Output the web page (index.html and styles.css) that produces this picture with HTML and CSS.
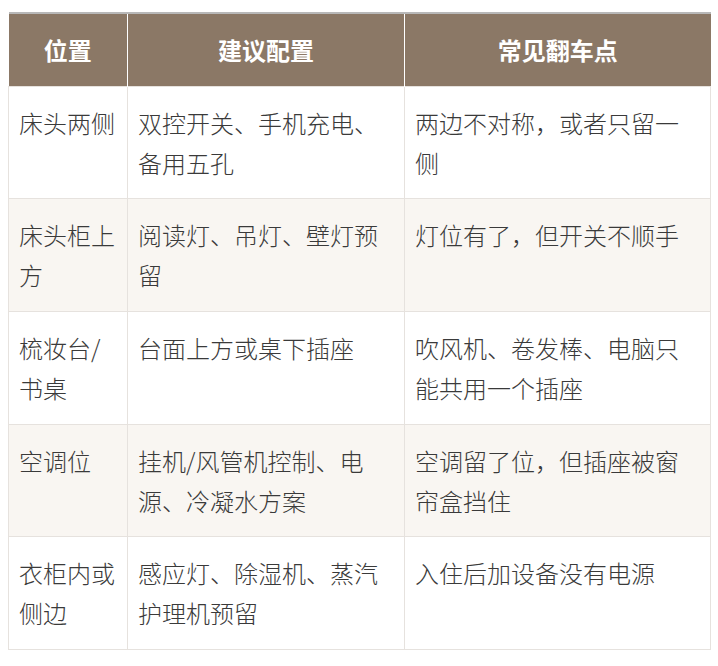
FILE: index.html
```html
<!DOCTYPE html>
<html lang="zh-CN">
<head>
<meta charset="utf-8">
<link rel="stylesheet" href="styles.css">
</head>
<body>
<table class="plan">
  <colgroup>
    <col class="c1"><col class="c2"><col class="c3">
  </colgroup>
  <thead>
    <tr><th>位置</th><th>建议配置</th><th>常见翻车点</th></tr>
  </thead>
  <tbody>
    <tr><td>床头两侧</td><td>双控开关、手机充电、备用五孔</td><td>两边不对称，或者只留一侧</td></tr>
    <tr><td>床头柜上方</td><td>阅读灯、吊灯、壁灯预留</td><td>灯位有了，但开关不顺手</td></tr>
    <tr><td>梳妆台/书桌</td><td>台面上方或桌下插座</td><td>吹风机、卷发棒、电脑只能共用一个插座</td></tr>
    <tr><td>空调位</td><td>挂机/风管机控制、电源、冷凝水方案</td><td>空调留了位，但插座被窗帘盒挡住</td></tr>
    <tr><td>衣柜内或侧边</td><td>感应灯、除湿机、蒸汽护理机预留</td><td>入住后加设备没有电源</td></tr>
  </tbody>
</table>
</body>
</html>
```
FILE: styles.css
```css
html, body {
  margin: 0;
  padding: 0;
  background: #ffffff;
}
body {
  padding: 12px 8px 0 8px;
  font-family: "Noto Sans CJK SC", "Noto Sans", sans-serif;
}
.plan {
  width: 702px;
  border-collapse: collapse;
  table-layout: fixed;
  border-top: 2px solid #b8b8b8;
  font-size: 24px;
  line-height: 1.66;
  color: #3a3a3a;
}
.c1 { width: 119px; }
.c2 { width: 277px; }
.c3 { width: 306px; }
.plan th {
  background: #8b7866;
  color: #ffffff;
  font-weight: 700;
  text-align: center;
  padding: 16px 10px;
  border-left: 1px solid #ffffff;
  border-right: 1px solid #ffffff;
}
.plan th:first-child { border-left: 0; }
.plan th:last-child { border-right: 0; }
.plan td {
  padding: 16px 10px;
  vertical-align: top;
  font-weight: 300;
  border: 1px solid #e6e2de;
  word-break: break-all;
}
.plan tbody tr:nth-child(even) td {
  background: #f9f6f2;
}
```
